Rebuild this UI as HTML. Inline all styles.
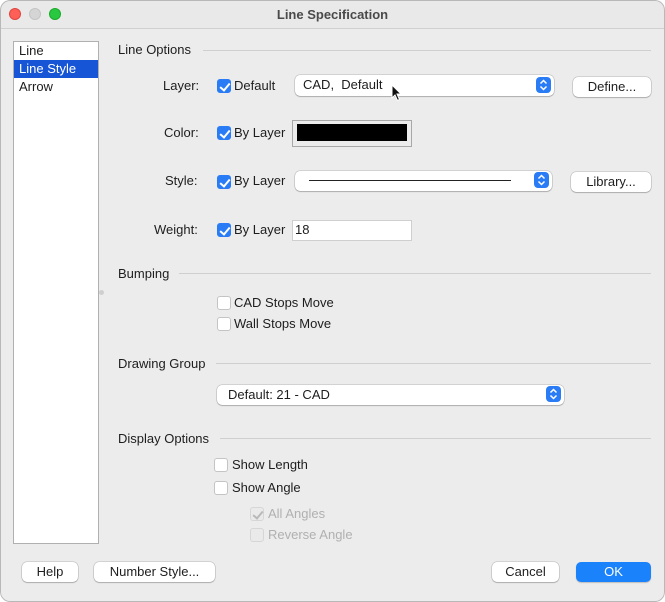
<!DOCTYPE html>
<html><head><meta charset="utf-8"><style>
*{box-sizing:border-box;margin:0;padding:0}
body{width:665px;height:602px;background:#fff;font-family:"Liberation Sans",sans-serif;font-size:13px;color:#1d1d1d;position:relative;overflow:hidden}
.win{position:absolute;left:0;top:0;width:665px;height:602px;background:#ececec;border-radius:10px;overflow:hidden}
.frame{position:absolute;left:0;top:0;width:665px;height:602px;border:1px solid #b8b8b8;border-radius:10px;pointer-events:none}
.tb{position:absolute;left:0;top:0;width:665px;height:29px;background:#e9e9e9;border-bottom:1px solid #d0d0d0}
.t{position:absolute;line-height:16px;height:16px;white-space:nowrap}
.dot{position:absolute;top:8px;width:12px;height:12px;border-radius:50%}
.cb{position:absolute;width:14px;height:14px;border-radius:3px;background:#fff;border:1px solid #c4c4c4}
.cb.on{background:#2a7cf6;border-color:#2a7cf6}
.cb.on::after{content:"";position:absolute;left:4px;top:1px;width:4px;height:8px;border:solid #fff;border-width:0 2px 2px 0;transform:rotate(40deg)}
.cb.dis{background:#eaeaea;border-color:#d6d6d6}
.cb.dis::after{content:"";position:absolute;left:4px;top:1px;width:4px;height:8px;border:solid #b9b9b9;border-width:0 2px 2px 0;transform:rotate(40deg)}
.cb.dis2{background:#eaeaea;border-color:#d6d6d6}
.hl{position:absolute;height:1px;background:#cfcfcf}
.btn{position:absolute;background:#fff;border-radius:5px;box-shadow:0 0 0 .5px rgba(0,0,0,.22),0 1px 1px rgba(0,0,0,.18);text-align:center;line-height:20px;height:20px}
.sel{position:absolute;background:#fff;border-radius:5px;box-shadow:0 0 0 .5px rgba(0,0,0,.22),0 1px 1px rgba(0,0,0,.18)}
.st{position:absolute;width:15px;height:16px;background:#2a7cf6;border-radius:4px;top:2px}
.st svg{position:absolute;left:0;top:0}
.gray{color:#b0b0b0}
</style></head><body><div class="win">
<div class="tb"></div>
<div class="dot" style="left:9px;background:#fe5f57;border:.5px solid #e0443e"></div>
<div class="dot" style="left:29px;background:#d5d5d5;border:.5px solid #c4c4c4"></div>
<div class="dot" style="left:49px;background:#28c840;border:.5px solid #1aab29"></div>
<div class="t" style="left:0;width:665px;text-align:center;top:7px;font-weight:bold;color:#4a4a4a">Line Specification</div>

<div style="position:absolute;left:13px;top:41px;width:86px;height:503px;background:#fff;border:1px solid #b0b0b0"></div>
<div style="position:absolute;left:14px;top:60px;width:84px;height:18px;background:#1655d6"></div>
<div class="t" style="left:19px;top:43px">Line</div>
<div class="t" style="left:19px;top:61px;color:#fff">Line Style</div>
<div class="t" style="left:19px;top:79px">Arrow</div>
<div style="position:absolute;left:99px;top:290px;width:5px;height:5px;border-radius:50%;background:#cfcfcf"></div>

<div class="t" style="left:118px;top:42px">Line Options</div><div class="hl" style="left:203px;top:50px;width:448px"></div>

<div class="t" style="left:163px;top:78px">Layer:</div>
<div class="cb on" style="left:217px;top:79px"></div>
<div class="t" style="left:234px;top:78px">Default</div>
<div class="sel" style="left:295px;top:75px;width:259px;height:21px"></div>
<div class="t" style="left:303px;top:77px">CAD,&nbsp; Default</div>
<div class="st" style="left:536px;top:77px"><svg width="15" height="16"><path d="M4.5 6.5L7.5 3.5L10.5 6.5M4.5 9.5L7.5 12.5L10.5 9.5" stroke="#fff" stroke-width="1.5" fill="none"/></svg></div>
<svg style="position:absolute;left:391px;top:84px" width="12" height="18"><path d="M1 1L1 14L4 11L6.5 16.5L8.5 15.5L6 10L10 10Z" fill="#111" stroke="#fff" stroke-width="1"/></svg>
<div class="btn" style="left:573px;top:77px;width:78px">Define...</div>

<div class="t" style="left:164px;top:125px">Color:</div>
<div class="cb on" style="left:217px;top:126px"></div>
<div class="t" style="left:234px;top:125px">By Layer</div>
<div style="position:absolute;left:292px;top:120px;width:120px;height:27px;border:1px solid #a8a8a8;background:#ececec"></div>
<div style="position:absolute;left:297px;top:124px;width:110px;height:17px;background:#000"></div>

<div class="t" style="left:165px;top:173px">Style:</div>
<div class="cb on" style="left:217px;top:175px"></div>
<div class="t" style="left:234px;top:173px">By Layer</div>
<div class="sel" style="left:295px;top:171px;width:257px;height:20px"></div>
<div style="position:absolute;left:309px;top:180px;width:202px;height:1px;background:#222"></div>
<div class="st" style="left:534px;top:172px"><svg width="15" height="16"><path d="M4.5 6.5L7.5 3.5L10.5 6.5M4.5 9.5L7.5 12.5L10.5 9.5" stroke="#fff" stroke-width="1.5" fill="none"/></svg></div>
<div class="btn" style="left:571px;top:172px;width:80px">Library...</div>

<div class="t" style="left:154px;top:222px">Weight:</div>
<div class="cb on" style="left:217px;top:223px"></div>
<div class="t" style="left:234px;top:222px">By Layer</div>
<div style="position:absolute;left:292px;top:220px;width:120px;height:21px;background:#fff;border:1px solid #cfcfcf"></div>
<div class="t" style="left:295px;top:222px">18</div>

<div class="t" style="left:118px;top:266px">Bumping</div><div class="hl" style="left:179px;top:273px;width:472px"></div>
<div class="cb" style="left:217px;top:296px"></div><div class="t" style="left:234px;top:295px">CAD Stops Move</div>
<div class="cb" style="left:217px;top:317px"></div><div class="t" style="left:234px;top:316px">Wall Stops Move</div>

<div class="t" style="left:118px;top:356px">Drawing Group</div><div class="hl" style="left:216px;top:363px;width:435px"></div>
<div class="sel" style="left:217px;top:385px;width:347px;height:20px"></div>
<div class="t" style="left:228px;top:387px">Default: 21 - CAD</div>
<div class="st" style="left:546px;top:386px"><svg width="15" height="16"><path d="M4.5 6.5L7.5 3.5L10.5 6.5M4.5 9.5L7.5 12.5L10.5 9.5" stroke="#fff" stroke-width="1.5" fill="none"/></svg></div>

<div class="t" style="left:118px;top:431px">Display Options</div><div class="hl" style="left:220px;top:438px;width:431px"></div>
<div class="cb" style="left:214px;top:458px"></div><div class="t" style="left:232px;top:457px">Show Length</div>
<div class="cb" style="left:214px;top:481px"></div><div class="t" style="left:232px;top:480px">Show Angle</div>
<div class="cb dis" style="left:250px;top:507px"></div><div class="t gray" style="left:268px;top:506px">All Angles</div>
<div class="cb dis2" style="left:250px;top:528px"></div><div class="t gray" style="left:268px;top:527px">Reverse Angle</div>

<div class="btn" style="left:22px;top:562px;width:56px">Help</div>
<div class="btn" style="left:94px;top:562px;width:121px">Number Style...</div>
<div class="btn" style="left:492px;top:562px;width:67px">Cancel</div>
<div class="btn" style="left:576px;top:562px;width:75px;background:#1a82fb;color:#fff;box-shadow:0 1px 1px rgba(0,0,0,.2)">OK</div>
<div class="frame"></div>
</div></body></html>
